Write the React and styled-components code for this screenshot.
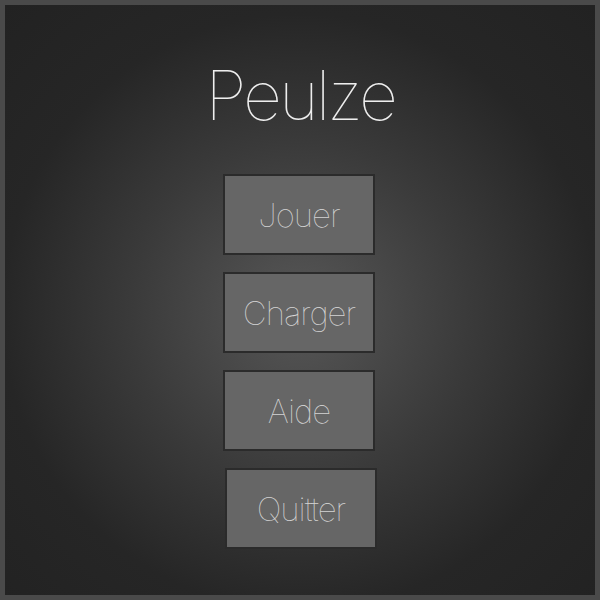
import React from 'react'
import styled, { createGlobalStyle } from 'styled-components'

const Global = createGlobalStyle`
  html, body {
    margin: 0;
    padding: 0;
    background: #4a4a4a;
    -webkit-font-smoothing: antialiased;
  }
`

const Frame = styled.div`
  width: 600px;
  height: 600px;
  box-sizing: border-box;
  border: 5px solid #4a4a4a;
  background: radial-gradient(circle at 50% 52%, #575757 0%, #3a3a3a 40%, #262626 70%, #222 100%);
  display: flex;
  flex-direction: column;
  align-items: center;
  font-family: 'Inter', 'Liberation Sans', sans-serif;
`

const Title = styled.h1`
  margin: 50px 0 0;
  font-size: 68px;
  font-weight: 100;
  color: #eee;
  line-height: 80px;
  letter-spacing: -3px;
`

const Menu = styled.div`
  margin-top: 39px;
  display: flex;
  flex-direction: column;
  gap: 17px;
`

const Button = styled.button`
  width: 152px;
  height: 81px;
  box-sizing: border-box;
  border: 2px solid #2b2b2b;
  background: #666;
  color: #d4d4d4;
  font-family: inherit;
  font-size: 33px;
  font-weight: 100;
  letter-spacing: -1px;
  padding: 0;
  cursor: pointer;
  margin-left: ${p => p.$shift || 0}px;
`

const items = ['Jouer', 'Charger', 'Aide', 'Quitter']

export default function App() {
  return (
    <>
      <Global />
      <Frame>
        <Title>Peulze</Title>
        <Menu>
          {items.map((t, i) => (
            <Button key={t} $shift={i === 3 ? 2 : 0}>{t}</Button>
          ))}
        </Menu>
      </Frame>
    </>
  )
}
